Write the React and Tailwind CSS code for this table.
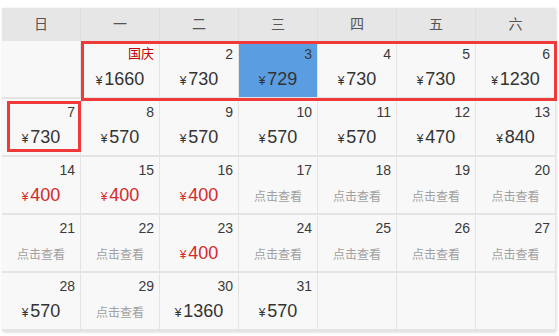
import React from "react";

const weekDays = ["日", "一", "二", "三", "四", "五", "六"];

// each cell: day label, price (or null = 点击查看), red = cheap price
const weeks = [
  [
    null,
    { day: "国庆", price: 1660, holiday: true },
    { day: 2, price: 730 },
    { day: 3, price: 729, selected: true },
    { day: 4, price: 730 },
    { day: 5, price: 730 },
    { day: 6, price: 1230 },
  ],
  [
    { day: 7, price: 730 },
    { day: 8, price: 570 },
    { day: 9, price: 570 },
    { day: 10, price: 570 },
    { day: 11, price: 570 },
    { day: 12, price: 470 },
    { day: 13, price: 840 },
  ],
  [
    { day: 14, price: 400, red: true },
    { day: 15, price: 400, red: true },
    { day: 16, price: 400, red: true },
    { day: 17 },
    { day: 18 },
    { day: 19 },
    { day: 20 },
  ],
  [
    { day: 21 },
    { day: 22 },
    { day: 23, price: 400, red: true },
    { day: 24 },
    { day: 25 },
    { day: 26 },
    { day: 27 },
  ],
  [
    { day: 28, price: 570 },
    { day: 29 },
    { day: 30, price: 1360 },
    { day: 31, price: 570 },
    null,
    null,
    null,
  ],
];

const DayCell = ({ cell, last }) => {
  if (!cell) {
    return <div className={`h-[56px] ${last ? "" : "border-r border-[#e4e4e4]"}`} />;
  }
  return (
    <div
      className={`h-[56px] flex flex-col ${last ? "" : "border-r border-[#e4e4e4]"} ${
        cell.selected ? "bg-[#5a9de0]" : ""
      }`}
    >
      <div
        className={`pt-[5px] pr-[5px] text-right leading-[16px] ${
          cell.holiday ? "text-[13px] text-[#c00000]" : "text-[14px] text-[#3a3a3a]"
        }`}
      >
        {cell.day}
      </div>
      {cell.price ? (
        <div
          className={`mt-[6px] text-center leading-[22px] ${
            cell.red ? "text-[#d42a2a]" : "text-[#333]"
          }`}
        >
          <span className="text-[12px] mr-[2px]">¥</span>
          <span className="text-[18px]">{cell.price}</span>
        </div>
      ) : (
        <div className="mt-[10px] text-center text-[12px] leading-[18px] text-[#a0a0a0]">点击查看</div>
      )}
    </div>
  );
};

export default function App() {
  return (
    <div
      className="relative w-[559px] h-[336px] bg-white pt-[8px] pl-[2px]"
      style={{ fontFamily: '"Liberation Sans", "Noto Sans CJK SC", sans-serif' }}
    >
      <div className="w-[553px] bg-[#f8f8f8] shadow-[1px_1px_3px_rgba(0,0,0,0.18)]">
        <div className="grid grid-cols-7 h-[33px] bg-[#e6e6e6]">
          {weekDays.map((d, i) => (
            <div
              key={d}
              className={`flex items-center justify-center text-[14px] text-[#555] ${
                i < 6 ? "border-r border-[#dedede]" : ""
              }`}
            >
              {d}
            </div>
          ))}
        </div>
        {weeks.map((week, wi) => (
          <div key={wi} className="grid grid-cols-7 border-b-2 border-[#e4e4e4]">
            {week.map((cell, ci) => (
              <DayCell key={ci} cell={cell} last={ci === 6} />
            ))}
          </div>
        ))}
      </div>

      {/* highlight annotations */}
      <div className="absolute left-[81px] top-[41px] w-[476px] h-[60px] border-[3px] border-[#f03a3a] pointer-events-none" />
      <div className="absolute left-[7px] top-[101px] w-[74px] h-[51px] border-[3px] border-[#f03a3a] pointer-events-none" />
    </div>
  );
}
